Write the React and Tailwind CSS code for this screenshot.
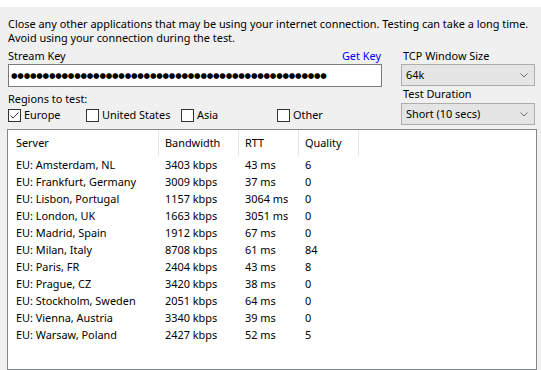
const rows = [
  ["EU: Amsterdam, NL", "3403 kbps", "43 ms", "6"],
  ["EU: Frankfurt, Germany", "3009 kbps", "37 ms", "0"],
  ["EU: Lisbon, Portugal", "1157 kbps", "3064 ms", "0"],
  ["EU: London, UK", "1663 kbps", "3051 ms", "0"],
  ["EU: Madrid, Spain", "1912 kbps", "67 ms", "0"],
  ["EU: Milan, Italy", "8708 kbps", "61 ms", "84"],
  ["EU: Paris, FR", "2404 kbps", "43 ms", "8"],
  ["EU: Prague, CZ", "3420 kbps", "38 ms", "0"],
  ["EU: Stockholm, Sweden", "2051 kbps", "64 ms", "0"],
  ["EU: Vienna, Austria", "3340 kbps", "39 ms", "0"],
  ["EU: Warsaw, Poland", "2427 kbps", "52 ms", "5"],
];

function Check({ checked, label, w }) {
  return (
    <div className={`flex items-center ${w}`}>
      <div className="w-[13px] h-[13px] border border-[#333333] bg-white flex items-center justify-center shrink-0">
        {checked && (
          <svg width="11" height="11" viewBox="0 0 11 11">
            <polyline points="1.5,5.5 4,8 9.5,2.5" fill="none" stroke="#333333" strokeWidth="1" />
          </svg>
        )}
      </div>
      <span className="ml-[3px] leading-[14px]">{label}</span>
    </div>
  );
}

function Combo({ value }) {
  return (
    <div className="h-[22px] w-[134px] border border-[#adadad] bg-[#e5e5e5] flex items-center justify-between pl-[4px] pr-[6px]">
      <span className="leading-[14px]">{value}</span>
      <svg width="8" height="5" viewBox="0 0 8 5">
        <polyline points="0.5,0.5 4,4 7.5,0.5" fill="none" stroke="#707070" strokeWidth="1" />
      </svg>
    </div>
  );
}

export default function App() {
  const dots = Array.from({ length: 50 });
  return (
    <div
      className="w-[541px] h-[370px] bg-[#f0f0f0] overflow-hidden flex flex-col text-[10.9px] text-black"
      style={{ fontFamily: '"Noto Sans", sans-serif' }}
    >
      <div className="h-[7px] bg-white shrink-0" />
      <div className="mt-[10px] pl-[8px] leading-[14px]">
        <div className="whitespace-nowrap">Close any other applications that may be using your internet connection. Testing can take a long time.</div>
        <div className="whitespace-nowrap">Avoid using your connection during the test.</div>
      </div>
      <div className="flex items-start mt-[4px] pl-[8px]">
        <div className="w-[374px] flex flex-col">
          <div className="flex justify-between leading-[14px]">
            <span>Stream Key</span>
            <span className="text-[#0000ff] pr-[1px]">Get Key</span>
          </div>
          <div className="mt-[1px] h-[23px] border border-[#7a7a7a] bg-white flex items-center pl-[2px]">
            {dots.map((_, i) => (
              <span key={i} className="w-[6.32px] text-center text-[7.5px] leading-[10px]" style={{ fontFamily: '"DejaVu Sans", sans-serif' }}>●</span>
            ))}
          </div>
          <div className="mt-[5px] leading-[14px]">Regions to test:</div>
          <div className="mt-[2px] flex items-center h-[14px]">
            <Check checked label="Europe" w="w-[78px]" />
            <Check label="United States" w="w-[95px]" />
            <Check label="Asia" w="w-[96px]" />
            <Check label="Other" w="" />
          </div>
        </div>
        <div className="ml-[19px] flex flex-col">
          <div className="leading-[14px] pl-[2px]">TCP Window Size</div>
          <div className="mt-[1px]"><Combo value="64k" /></div>
          <div className="mt-[1px] leading-[14px] pl-[2px]">Test Duration</div>
          <div className="mt-[2px]"><Combo value="Short (10 secs)" /></div>
        </div>
      </div>
      <div className="mt-[4px] ml-[7px] w-[530px] flex-1 border border-[#828790] bg-white">
        <div className="flex h-[26px] items-center pl-0">
          <div className="w-[151px] h-full flex items-center pl-[8px] border-r border-[#e5e5e5]">Server</div>
          <div className="w-[80px] h-full flex items-center pl-[6px] border-r border-[#e5e5e5]">Bandwidth</div>
          <div className="w-[60px] h-full flex items-center pl-[6px] border-r border-[#e5e5e5]">RTT</div>
          <div className="w-[60px] h-full flex items-center pl-[6px] border-r border-[#e5e5e5]">Quality</div>
        </div>
        {rows.map((r, i) => (
          <div key={i} className="flex h-[17px] items-center leading-[17px]">
            <div className="w-[151px] pl-[8px] whitespace-nowrap">{r[0]}</div>
            <div className="w-[80px] pl-[6px] whitespace-nowrap">{r[1]}</div>
            <div className="w-[60px] pl-[6px] whitespace-nowrap">{r[2]}</div>
            <div className="w-[60px] pl-[6px] whitespace-nowrap">{r[3]}</div>
          </div>
        ))}
      </div>
    </div>
  );
}
